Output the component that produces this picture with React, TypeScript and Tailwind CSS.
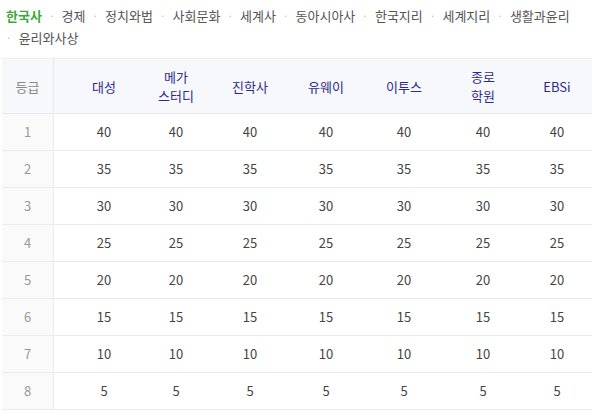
import React from 'react';

const subjects = ["한국사", "경제", "정치와법", "사회문화", "세계사", "동아시아사", "한국지리", "세계지리", "생활과윤리", "윤리와사상"];

const heads: React.ReactNode[] = [
  "대성",
  <>메가<br />스터디</>,
  "진학사",
  "유웨이",
  "이투스",
  <>종로<br />학원</>,
  "EBSi",
];

const scores = [40, 35, 30, 25, 20, 15, 10, 5];

const cols = "grid grid-cols-[52px_86px_72px_76px_76px_80px_78px_70px]";

export default function App() {
  return (
    <div className="w-[594px] h-[418px] bg-white text-[13px] overflow-hidden" style={{ fontFamily: '"Noto Sans CJK KR", "Noto Sans", sans-serif' }}>
      <div className="flex flex-wrap pl-[6px] pt-[5px] leading-[22px] text-[#555]">
        {subjects.map((s, i) => (
          <span key={s} className={`flex items-center ${i < subjects.length - 1 ? "mr-[7px]" : ""}`}>
            {i > 0 && <span className="text-[#bbb] text-[10px] mr-[7px]">·</span>}
            <span className={i === 0 ? "text-[#3aa93a] font-bold" : ""}>{s}</span>
          </span>
        ))}
      </div>

      <div className="ml-[2px] mt-[9px] w-[590px] border-t border-[#eceef1]">
        <div className={`${cols} h-[55px] bg-[#f6f8fb] border-b border-[#e6e8eb] items-center leading-[19px]`}>
          <div className="h-full flex items-center justify-center text-[#888] border-r border-[#e6e8eb]">등급</div>
          {heads.map((h, i) => (
            <div key={i} className={`text-center text-[#2e2b8c] ${i === 0 ? "pl-[14px]" : ""}`}>{h}</div>
          ))}
        </div>
        {scores.map((v, r) => (
          <div key={r} className={`${cols} h-[37px] border-b border-[#ebebeb] items-center`}>
            <div className="h-full flex items-center justify-center bg-[#fafafa] text-[#999] border-r border-[#ebebeb]">{r + 1}</div>
            {heads.map((_, i) => (
              <div key={i} className={`text-center text-[#444] ${i === 0 ? "pl-[14px]" : ""}`}>{v}</div>
            ))}
          </div>
        ))}
      </div>
    </div>
  );
}
